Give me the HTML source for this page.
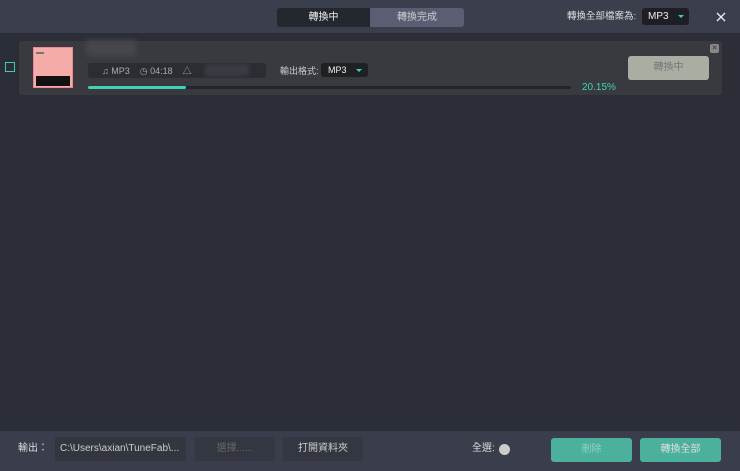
<!DOCTYPE html>
<html><head><meta charset="utf-8"><style>
body{margin:0;width:740px;height:471px;background:#2b2e37;font-family:"Liberation Sans","Noto Sans CJK TC",sans-serif;position:relative;overflow:hidden;color:#ddd;line-height:12px}
div,span{position:absolute;box-sizing:border-box}
.c{display:flex;align-items:center;justify-content:center}
</style></head><body>
<div style="left:0;top:0;width:740px;height:33px;background:#3b3e4d"></div>
<div class="c" style="left:277px;top:8px;width:93px;height:19px;background:#25272e;border-radius:3px 0 0 3px;font-size:10px;color:#eee">轉換中</div>
<div class="c" style="left:370px;top:8px;width:94px;height:19px;background:#5b5e73;border-radius:0 3px 3px 0;font-size:10px;color:#ccc">轉換完成</div>
<div style="left:567px;top:11px;font-size:9.5px;color:#ddd">轉換全部檔案為:</div>
<div style="left:642px;top:8px;width:47px;height:17px;background:#1e1f24;border-radius:3px;font-size:10px;color:#eee;padding:3px 0 0 6px">MP3</div>
<div style="left:678px;top:15px;border:3px solid transparent;border-top:3px solid #3cd0c0;border-bottom:0"></div>
<svg style="position:absolute;left:716px;top:12px" width="10" height="10"><path d="M1 1L9 9M9 1L1 9" stroke="#eee" stroke-width="1.3"/></svg>

<div style="left:5px;top:62px;width:10px;height:10px;border:1.5px solid #3cc9b8"></div>
<div style="left:19px;top:41px;width:703px;height:54px;background:#393a3f;border-radius:3px"></div>
<div style="left:33px;top:47px;width:40px;height:41px;background:#f5aca9;border:1px solid #e89"></div>
<div style="left:36px;top:76px;width:34px;height:10px;background:#111"></div>
<div style="left:36px;top:52px;width:8px;height:2px;background:#777"></div>
<div style="left:86px;top:40px;width:50px;height:16px;background:#46474c;filter:blur(3px)"></div>
<div style="left:88px;top:63px;width:178px;height:15px;background:#2b2d33;border-radius:3px"></div>
<div style="left:102px;top:65px;font-size:9px;color:#aaa">♫ MP3 &nbsp;&nbsp;&nbsp;◷ 04:18 &nbsp;&nbsp;&nbsp;△</div>
<div style="left:205px;top:64px;width:44px;height:12px;background:#3a3c44;filter:blur(2px)"></div>
<div style="left:280px;top:65px;font-size:9px;color:#ccc">輸出格式:</div>
<div style="left:321px;top:63px;width:47px;height:14px;background:#1f2024;border-radius:3px;font-size:9px;color:#eee;padding:1px 0 0 7px">MP3</div>
<div style="left:356px;top:69px;border:3px solid transparent;border-top:3px solid #3cd0c0;border-bottom:0"></div>
<div style="left:88px;top:86px;width:483px;height:3px;background:#23252a;border-radius:2px"></div>
<div style="left:88px;top:86px;width:98px;height:3px;background:#3ed3b6;border-radius:2px"></div>
<div style="left:582px;top:82px;font-size:10px;color:#3ed3b6">20.15%</div>
<div class="c" style="left:628px;top:56px;width:81px;height:24px;background:#a8aea2;border-radius:3px;font-size:10px;color:#777">轉換中</div>
<div class="c" style="left:710px;top:44px;width:9px;height:9px;background:#888;border-radius:2px;font-size:7px;color:#333">✕</div>

<div style="left:0;top:431px;width:740px;height:40px;background:#3a3d4b"></div>
<div style="left:18px;top:443px;font-size:10px;color:#ddd">輸出：</div>
<div style="left:55px;top:437px;width:131px;height:24px;background:#33363f;font-size:10px;color:#ccc;padding:6px 0 0 5px">C:\Users\axian\TuneFab\...</div>
<div class="c" style="left:195px;top:437px;width:80px;height:24px;background:#343741;font-size:10px;color:#666">選擇......</div>
<div class="c" style="left:283px;top:437px;width:80px;height:24px;background:#343741;font-size:10px;color:#ccc">打開資料夾</div>
<div style="left:472px;top:443px;font-size:10px;color:#ddd">全選:</div>
<div style="left:499px;top:444px;width:11px;height:11px;border-radius:50%;background:#ccc"></div>
<div class="c" style="left:551px;top:438px;width:81px;height:24px;background:#4bb19d;border-radius:3px;font-size:10px;color:#8cd0c0">刪除</div>
<div class="c" style="left:640px;top:438px;width:81px;height:24px;background:#4bb19d;border-radius:3px;font-size:10px;color:#ddd">轉換全部</div>
</body></html>
